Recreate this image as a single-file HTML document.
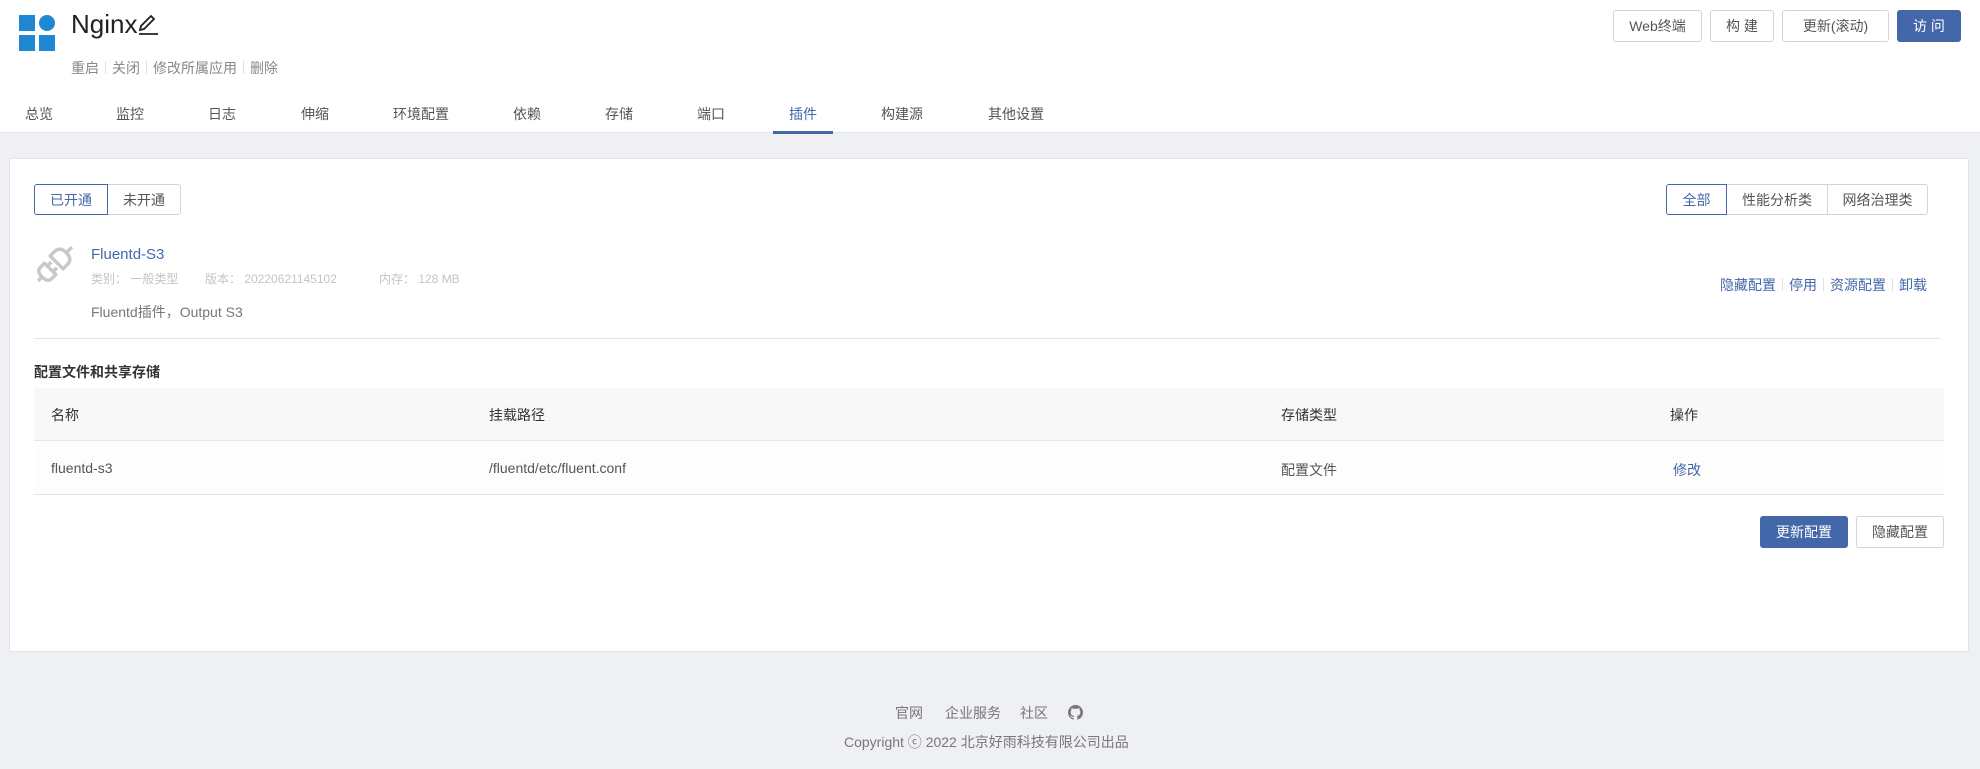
<!DOCTYPE html>
<html><head><meta charset="utf-8">
<style>
*{margin:0;padding:0;box-sizing:border-box}
body{width:1980px;height:769px;background:#eef0f4;font-family:"Liberation Sans","Noto Sans CJK SC",sans-serif;color:#666;font-size:14px;position:relative;overflow:hidden}
.a{position:absolute;white-space:nowrap}
.hdr{position:absolute;left:0;top:0;width:1980px;height:133px;background:#fff;border-bottom:1px solid #e3e5ea}
.btn{position:absolute;height:32px;border:1px solid #d4d4d4;border-radius:3px;background:#fff;color:#555;font-size:14px;display:flex;align-items:center;justify-content:center}
.pri{background:#4467a9;border-color:#4467a9;color:#fff}
.tab{position:absolute;top:104px;font-size:14px;color:#555}
.blue{color:#4467a9}
.sep{display:inline-block;width:1px;height:13px;background:#e0e0e0;margin:0 6px;vertical-align:-1px}
</style></head><body>
<div class="hdr"></div>
<svg class="a" style="left:19px;top:15px" width="36" height="36" viewBox="0 0 36 36">
<rect x="0" y="0" width="16" height="16" fill="#1f88d4"/>
<circle cx="28" cy="8" r="8" fill="#1f88d4"/>
<rect x="0" y="20" width="16" height="16" fill="#1f88d4"/>
<rect x="20" y="20" width="16" height="16" fill="#1f88d4"/>
</svg>
<div class="a" style="left:71px;top:9px;font-size:26px;color:#222">Nginx</div>
<svg class="a" style="left:136px;top:12px" width="24" height="24" viewBox="0 0 24 24" fill="none" stroke="#222" stroke-width="1.8"><path d="M4 18 L5 14 L15 4 L18 7 L8 17 Z"/><path d="M3 22 H22"/></svg>
<div class="a" style="left:71px;top:58px;font-size:14px;color:#888">重启<span class="sep"></span>关闭<span class="sep"></span>修改所属应用<span class="sep"></span>删除</div>

<div class="btn" style="left:1613px;top:10px;width:89px">Web终端</div>
<div class="btn" style="left:1710px;top:10px;width:64px">构 建</div>
<div class="btn" style="left:1782px;top:10px;width:107px">更新(滚动)</div>
<div class="btn pri" style="left:1897px;top:10px;width:64px">访 问</div>

<div class="tab" style="left:25px">总览</div>
<div class="tab" style="left:116px">监控</div>
<div class="tab" style="left:208px">日志</div>
<div class="tab" style="left:301px">伸缩</div>
<div class="tab" style="left:393px">环境配置</div>
<div class="tab" style="left:513px">依赖</div>
<div class="tab" style="left:605px">存储</div>
<div class="tab" style="left:697px">端口</div>
<div class="tab blue" style="left:789px">插件</div>
<div class="tab" style="left:881px">构建源</div>
<div class="tab" style="left:988px">其他设置</div>
<div class="a" style="left:773px;top:131px;width:60px;height:3px;background:#4467a9"></div>

<div class="a" style="left:9px;top:158px;width:1960px;height:494px;background:#fff;border:1px solid #e3e5ea"></div>

<div class="btn" style="left:34px;top:184px;width:74px;height:31px;border-color:#4467a9;color:#4467a9;border-radius:3px 0 0 3px;z-index:2">已开通</div>
<div class="btn" style="left:107px;top:184px;width:74px;height:31px;border-radius:0 3px 3px 0">未开通</div>
<div class="btn" style="left:1666px;top:184px;width:61px;height:31px;border-color:#4467a9;color:#4467a9;border-radius:3px 0 0 3px;z-index:2">全部</div>
<div class="btn" style="left:1726px;top:184px;width:102px;height:31px;border-radius:0">性能分析类</div>
<div class="btn" style="left:1827px;top:184px;width:101px;height:31px;border-radius:0 3px 3px 0">网络治理类</div>

<svg class="a" style="left:31px;top:240px" width="48" height="48" viewBox="0 0 42 42">
<g transform="rotate(-45 21 21)" fill="none" stroke="#c8c8c8" stroke-width="3" stroke-linejoin="round">
<path d="M0 21 H5"/>
<path d="M15 14 H10 Q5 14 5 21 Q5 28 10 28 H15 Z"/>
<path d="M15 17.5 H20 M15 24.5 H20"/>
<path d="M23 13 H28 Q35 13 35 21 Q35 29 28 29 H23 Z"/>
<path d="M35 21 H42"/>
</g>
</svg>
<div class="a blue" style="left:91px;top:246px;font-size:15px">Fluentd-S3</div>
<div class="a" style="left:91px;top:270px;font-size:12px;color:#c4c4c4">类别： 一般类型</div>
<div class="a" style="left:205px;top:270px;font-size:12px;color:#c4c4c4">版本： 20220621145102</div>
<div class="a" style="left:379px;top:270px;font-size:12px;color:#c4c4c4">内存： 128 MB</div>
<div class="a" style="left:91px;top:302px;font-size:14px;color:#777">Fluentd插件，Output S3</div>
<div class="a blue" style="left:1720px;top:275px;font-size:14px">隐藏配置<span class="sep"></span>停用<span class="sep"></span>资源配置<span class="sep"></span>卸载</div>
<div class="a" style="left:34px;top:338px;width:1907px;height:1px;background:#e5e5e5"></div>

<div class="a" style="left:34px;top:362px;font-size:14px;color:#333;font-weight:bold">配置文件和共享存储</div>
<div class="a" style="left:34px;top:388px;width:1910px;height:53px;background:#f8f8f8;border-radius:3px 3px 0 0;border-bottom:1px solid #e5e5e5"></div>
<div class="a" style="left:34px;top:441px;width:1910px;height:54px;background:#fdfdfd;border-bottom:1px solid #e5e5e5"></div>
<div class="a" style="left:51px;top:405px;color:#333">名称</div>
<div class="a" style="left:489px;top:405px;color:#333">挂载路径</div>
<div class="a" style="left:1281px;top:405px;color:#333">存储类型</div>
<div class="a" style="left:1670px;top:405px;color:#333">操作</div>
<div class="a" style="left:51px;top:460px;color:#555">fluentd-s3</div>
<div class="a" style="left:489px;top:460px;color:#555">/fluentd/etc/fluent.conf</div>
<div class="a" style="left:1281px;top:460px;color:#555">配置文件</div>
<div class="a blue" style="left:1673px;top:460px">修改</div>

<div class="btn pri" style="left:1760px;top:516px;width:88px;height:32px">更新配置</div>
<div class="btn" style="left:1856px;top:516px;width:88px;height:32px">隐藏配置</div>

<div class="a" style="left:895px;top:703px;color:#777">官网</div>
<div class="a" style="left:945px;top:703px;color:#777">企业服务</div>
<div class="a" style="left:1020px;top:703px;color:#777">社区</div>
<svg class="a" style="left:1068px;top:705px" width="15" height="15" viewBox="0 0 16 16"><path fill="#777" d="M8 0C3.580 0 0 3.58 0 8c0 3.54 2.290 6.53 5.470 7.590.4.07.55-.17.55-.38 0-.19-.01-.82-.01-1.490-2.010.37-2.530-.49-2.690-.94-.09-.23-.48-.94-.82-1.130-.28-.15-.68-.52-.01-.53.63-.01 1.080.58 1.230.82.72 1.210 1.870.87 2.330.66.07-.52.28-.87.51-1.070-1.780-.2-3.640-.89-3.640-3.950 0-.87.31-1.590.82-2.150-.08-.2-.36-1.020.08-2.120 0 0 .67-.21 2.200.82.64-.18 1.320-.27 2-.27.68 0 1.360.09 2 .27 1.530-1.040 2.200-.82 2.200-.82.44 1.100.16 1.920.08 2.120.51.56.82 1.270.82 2.150 0 3.070-1.870 3.750-3.650 3.950.29.25.54.73.54 1.480 0 1.070-.01 1.930-.01 2.200 0 .21.15.46.55.38A8.013 8.013 0 0016 8c0-4.420-3.580-8-8-8z"/></svg>
<div class="a" style="left:844px;top:732px;color:#777;font-size:14px">Copyright ⓒ 2022 北京好雨科技有限公司出品</div>
</body></html>
